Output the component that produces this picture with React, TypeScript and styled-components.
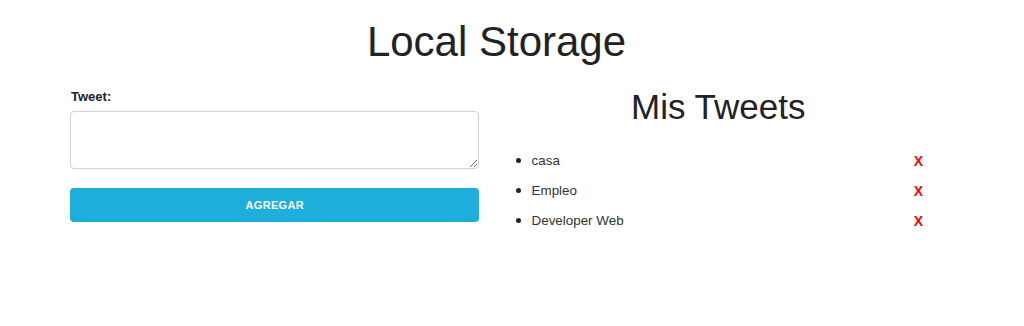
import { useState } from "react";
import styled, { createGlobalStyle } from "styled-components";

const colors = {
  text: "#222",
  muted: "#333",
  border: "#d1d1d1",
  primary: "#1eaedb",
  danger: "#ff0000",
};

const GlobalStyle = createGlobalStyle`
  html, body {
    margin: 0;
    padding: 0;
    background: #fff;
  }
  body {
    font-family: "Liberation Sans", Arial, sans-serif;
    color: ${colors.text};
  }
  * {
    box-sizing: border-box;
  }
`;

const Container = styled.div`
  width: 853px;
  margin-left: 70px;
`;

const Title = styled.h1`
  margin: 17px 0 0;
  font-size: 42px;
  font-weight: 400;
  line-height: 50px;
  text-align: center;
  color: ${colors.text};
`;

const Row = styled.div`
  display: grid;
  grid-template-columns: 48% 48%;
  column-gap: 4%;
  margin-top: 22px;
`;

const Column = styled.div`
  display: flex;
  flex-direction: column;
`;

const Label = styled.label`
  font-size: 13px;
  font-weight: 700;
  line-height: 16px;
  margin: 0 0 6px 1px;
  color: ${colors.text};
`;

const TextArea = styled.textarea`
  width: 100%;
  height: 58px;
  border: 1px solid ${colors.border};
  border-radius: 4px;
  padding: 6px 10px;
  font-family: inherit;
  font-size: 13px;
  outline: none;
  margin: 0;
`;

const Button = styled.button`
  margin-top: 19px;
  width: 100%;
  height: 34px;
  border: none;
  border-radius: 4px;
  background: ${colors.primary};
  color: #fff;
  font-family: inherit;
  font-size: 11px;
  font-weight: 700;
  letter-spacing: 0.3px;
  text-transform: uppercase;
  cursor: pointer;
`;

const Subtitle = styled.h2`
  margin: -4px 0 0;
  font-size: 35px;
  font-weight: 400;
  line-height: 44px;
  text-align: center;
  color: ${colors.text};
`;

const List = styled.ul`
  margin: 21px 0 0;
  padding-left: 18px;
  list-style: disc outside;
`;

const Item = styled.li`
  font-size: 13.4px;
  line-height: 20px;
  margin-bottom: 9px;
  color: ${colors.muted};

  &::marker {
    font-size: 15px;
    color: ${colors.text};
  }
`;

const ItemRow = styled.div`
  display: flex;
  justify-content: space-between;
  align-items: center;
`;

const Remove = styled.a`
  font-size: 14px;
  font-weight: 700;
  color: ${colors.danger};
  text-decoration: none;
  cursor: pointer;
`;

export default function App() {
  const [tweet, setTweet] = useState("");
  const [tweets, setTweets] = useState(["casa", "Empleo", "Developer Web"]);

  const agregar = () => {
    if (!tweet.trim()) return;
    setTweets([...tweets, tweet.trim()]);
    setTweet("");
  };

  return (
    <>
      <GlobalStyle />
      <Container>
        <Title>Local Storage</Title>
        <Row>
          <Column>
            <Label htmlFor="tweet">Tweet:</Label>
            <TextArea
              id="tweet"
              value={tweet}
              onChange={(e) => setTweet(e.target.value)}
            />
            <Button onClick={agregar}>Agregar</Button>
          </Column>
          <Column>
            <Subtitle>Mis Tweets</Subtitle>
            <List>
              {tweets.map((t, i) => (
                <Item key={i}>
                  <ItemRow>
                    <span>{t}</span>
                    <Remove
                      onClick={() =>
                        setTweets(tweets.filter((_, j) => j !== i))
                      }
                    >
                      X
                    </Remove>
                  </ItemRow>
                </Item>
              ))}
            </List>
          </Column>
        </Row>
      </Container>
    </>
  );
}
